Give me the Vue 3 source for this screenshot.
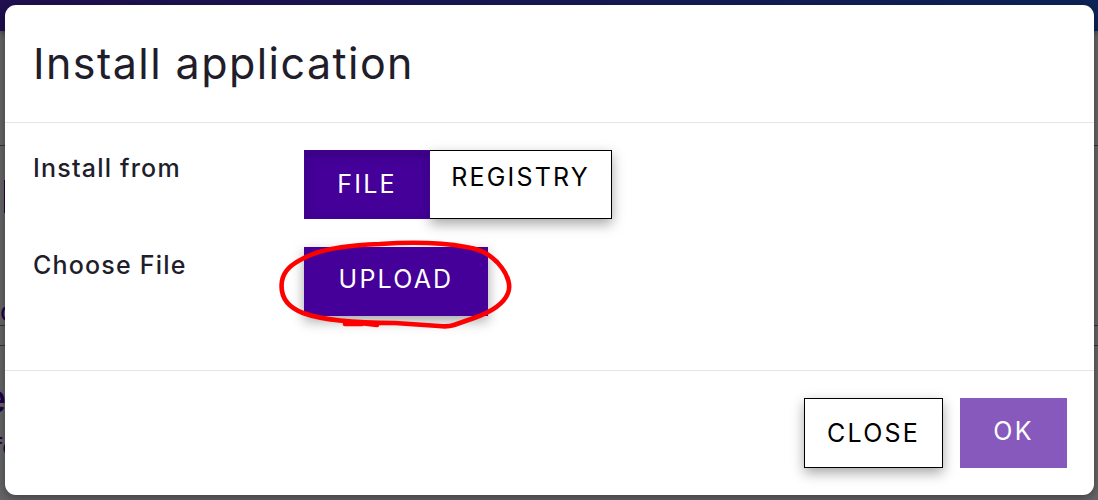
<script setup>
import { ref } from 'vue'

const sources = ['File', 'Registry']
const source = ref('File')
</script>

<template>
  <div class="page">
    <div class="topbar"></div>
    <div class="rule rule-1"></div>
    <div class="rule rule-2"></div>
    <div class="rule rule-3"></div>
    <div class="page-mark"></div>
    <span class="page-text text-1">c</span>
    <span class="page-text text-2">e</span>
    <span class="page-text text-3">fc</span>

    <div class="modal">
      <header class="modal-header">
        <h1>Install application</h1>
      </header>

      <main class="modal-body">
        <div class="row">
          <label>Install from</label>
          <div class="toggle">
            <button
              v-for="item in sources"
              :key="item"
              :class="['btn', item.toLowerCase(), { active: source === item }]"
              @click="source = item"
            >{{ item }}</button>
          </div>
        </div>
        <div class="row">
          <label>Choose File</label>
          <div class="upload-wrap">
            <button class="btn upload">Upload</button>
            <svg class="circle" width="240" height="96" viewBox="275 237 240 96">
              <path d="M304 258 C325 247 357 245 380 244 C410 242 444 243 466 247 C482 249 494 257 502 268 C508 276 511 286 508 293 C503 306 488 313 474 318 L454 325 Q448 327 439 326 L395 323 C365 323 325 321 303 313 C285 306 280 294 282 281 C284 270 292 264 304 258 Z" />
              <path d="M345 324 L362 324 M360 323 L377 325" />
            </svg>
          </div>
        </div>
      </main>

      <footer class="modal-footer">
        <button class="btn close">Close</button>
        <button class="btn ok" disabled>OK</button>
      </footer>
    </div>
  </div>
</template>

<style>
body {
  margin: 0;
  overflow: hidden;
}
</style>

<style scoped>
.page {
  position: relative;
  width: 1098px;
  height: 500px;
  padding: 5px 4px 5px 5px;
  box-sizing: border-box;
  overflow: hidden;
  background: #67676a;
  color: #211d2b;
  font-family: Inter, 'Liberation Sans', sans-serif;
}

.topbar {
  position: absolute;
  top: 0;
  left: 0;
  right: 0;
  height: 31px;
  background: linear-gradient(90deg, #210f50, #0d2459);
  box-shadow: 0 1px 6px rgba(0, 0, 0, 0.45);
}

.rule {
  position: absolute;
  left: 0;
  right: 0;
  height: 1px;
  background: #363638;
}

.rule-1 {
  top: 145px;
}

.rule-2 {
  top: 325px;
}

.rule-3 {
  top: 345px;
}

.page-mark {
  position: absolute;
  left: 4px;
  top: 180px;
  width: 3px;
  height: 33px;
  background: #290044;
}

.page-text {
  position: absolute;
  color: #210047;
  line-height: 1;
}

.text-1 {
  left: 0;
  top: 299px;
  font-size: 26px;
}

.text-2 {
  left: -18px;
  top: 377px;
  font-size: 42px;
}

.text-3 {
  left: -6px;
  top: 435px;
  font-size: 24px;
}

.modal {
  position: relative;
  display: flex;
  flex-direction: column;
  height: 490px;
  border-radius: 11px;
  background: #fff;
  box-shadow: 0 3px 12px rgba(0, 0, 0, 0.4);
}

.modal-header {
  height: 117px;
  padding-left: 28px;
  border-bottom: 1px solid #e5e5e5;
}

h1 {
  margin: 0;
  font-size: 43px;
  font-weight: 400;
  line-height: 117px;
  letter-spacing: 1.45px;
}

.modal-body {
  display: flex;
  flex-direction: column;
  gap: 28px;
  height: 247px;
  padding: 27px 28px 0;
  box-sizing: border-box;
}

.row {
  display: flex;
  height: 69px;
}

label {
  width: 271px;
  font-size: 25px;
  font-weight: 500;
  line-height: 37px;
  letter-spacing: 1.2px;
}

.toggle {
  display: flex;
}

.btn {
  box-sizing: border-box;
  height: 69px;
  padding: 0;
  border: 1px solid #000;
  border-radius: 0;
  background: #fff;
  color: #000;
  font-family: inherit;
  font-size: 25px;
  font-weight: 400;
  line-height: 30px;
  letter-spacing: 2.2px;
  text-transform: uppercase;
  white-space: nowrap;
  box-shadow: 0 5px 12px rgba(0, 0, 0, 0.35);
  cursor: pointer;
}

.file {
  width: 126px;
  padding-bottom: 2px;
}

.registry {
  width: 182px;
  padding: 0 0 16px;
  border-left: 0;
}

.btn.active {
  position: relative;
  border-color: #440099;
  background: #440099;
  color: #fff;
  box-shadow: inset 0 3px 12px rgba(0, 0, 0, 0.2);
}

.upload-wrap {
  position: relative;
}

.upload {
  width: 184px;
  padding-bottom: 5px;
  border-color: #440099;
  background: #440099;
  color: #fff;
}

.circle {
  position: absolute;
  left: -29px;
  top: -10px;
  fill: none;
  stroke: #f00;
  stroke-width: 4.6;
  stroke-linecap: round;
  stroke-linejoin: round;
  pointer-events: none;
}

.modal-footer {
  display: flex;
  justify-content: flex-end;
  gap: 17px;
  padding: 27px 27px 0;
  border-top: 1px solid #e5e5e5;
}

.close {
  width: 139px;
  height: 70px;
}

.ok {
  width: 107px;
  height: 70px;
  padding-bottom: 4px;
  border-color: #8759bd;
  background: #8759bd;
  color: #fff;
  box-shadow: none;
  cursor: default;
}
</style>
